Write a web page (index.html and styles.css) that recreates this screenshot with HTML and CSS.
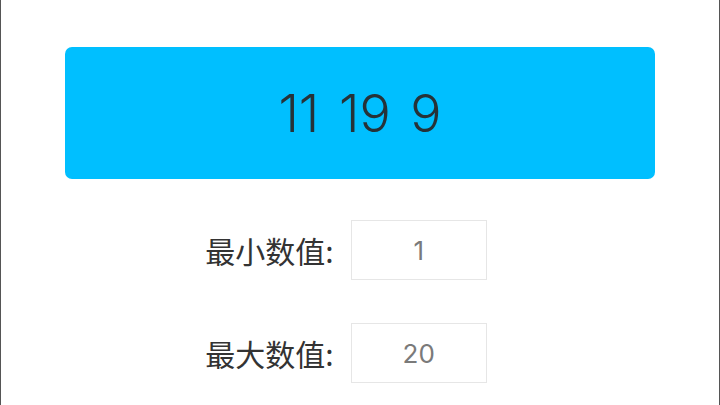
FILE: index.html
```html
<!DOCTYPE html>
<html lang="zh-CN">
<head>
<meta charset="utf-8">
<link rel="stylesheet" href="styles.css">
</head>
<body>
<div class="page">
  <div class="result">11 19 9</div>
  <div class="fields">
    <div class="row">
      <span class="label">最小数值:</span>
      <div class="box">1</div>
    </div>
    <div class="row">
      <span class="label">最大数值:</span>
      <div class="box">20</div>
    </div>
  </div>
</div>
</body>
</html>
```
FILE: styles.css
```css
html, body {
  margin: 0;
  padding: 0;
  background: #ffffff;
}
.page {
  box-sizing: border-box;
  width: 720px;
  height: 405px;
  border-left: 1px solid #555555;
  border-right: 1px solid #555555;
  padding: 47px 64px 0;
  font-family: Inter, "Noto Sans CJK SC", sans-serif;
  overflow: hidden;
}
.result {
  height: 132px;
  background: #00bfff;
  border-radius: 7px;
  display: flex;
  align-items: center;
  justify-content: center;
  font-size: 52px;
  font-weight: 300;
  color: #263238;
  letter-spacing: 0;
  word-spacing: 5px;
}
.fields {
  margin-top: 41px;
  display: flex;
  flex-direction: column;
  gap: 43px;
  padding-right: 28px;
}
.row {
  display: flex;
  align-items: center;
  justify-content: center;
  gap: 17px;
}
.label {
  font-family: "Noto Sans CJK SC", sans-serif;
  font-size: 30px;
  font-weight: 400;
  color: #333333;
}
.box {
  box-sizing: border-box;
  width: 136px;
  height: 60px;
  border: 1px solid #e6e6e6;
  display: flex;
  align-items: center;
  justify-content: center;
  font-size: 26px;
  font-weight: 400;
  color: #7a7a7a;
}
```
